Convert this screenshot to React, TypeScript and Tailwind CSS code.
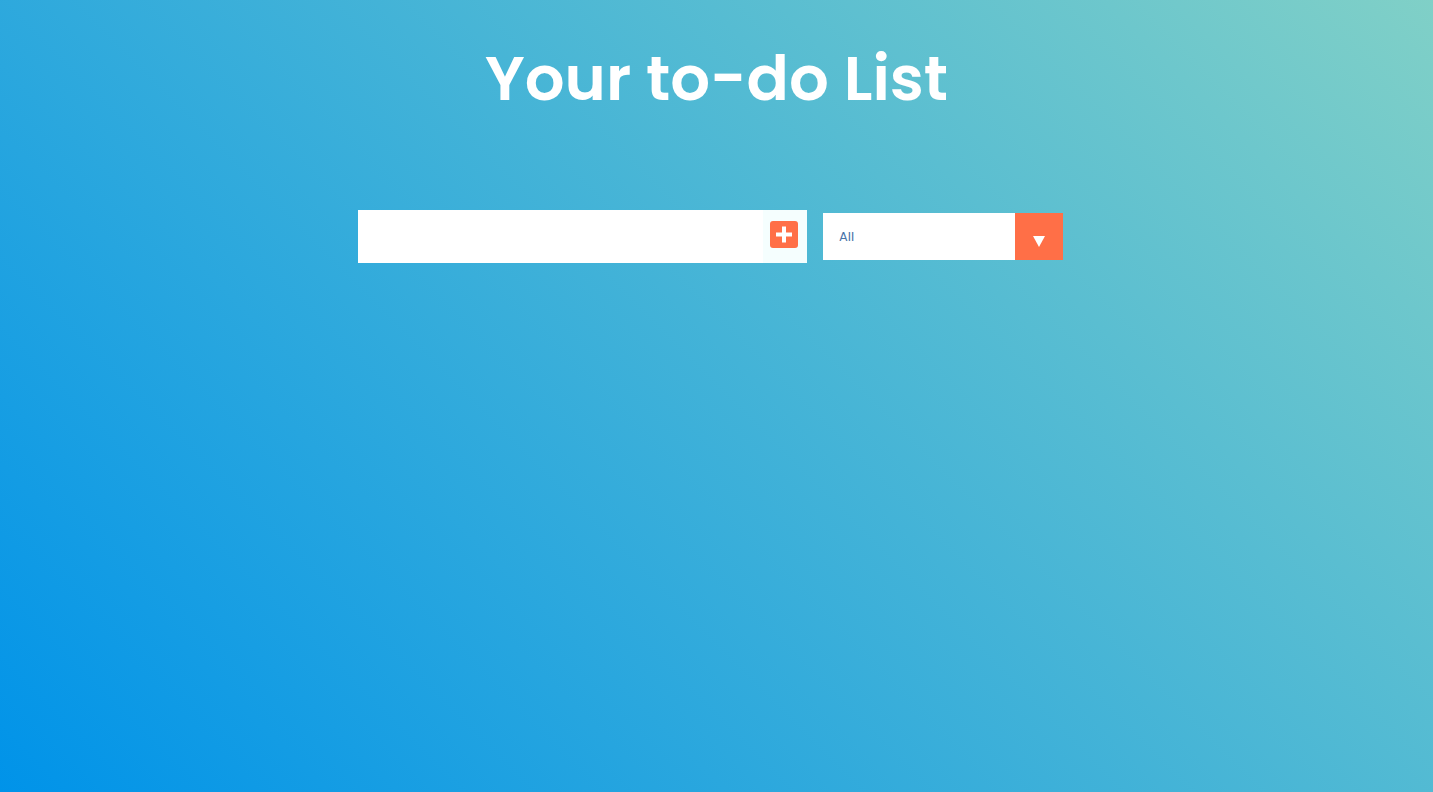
import { useState } from 'react';

const PlusIcon = () => (
  <svg width="28" height="27" viewBox="0 0 28 27">
    <rect x="0" y="0" width="28" height="27" rx="3" fill="#ff6f47" />
    <rect x="6" y="11.5" width="16" height="4" fill="white" />
    <rect x="12" y="5.5" width="4" height="16" fill="white" />
  </svg>
);

const App = () => {
  const [text, setText] = useState('');
  const [filter, setFilter] = useState('all');

  return (
    <div className="min-h-[792px] w-full bg-[linear-gradient(45deg,#0093e9_0%,#80d0c7_100%)] font-['Poppins','Lato','Liberation_Sans',sans-serif] text-white">
      <header className="flex justify-center pt-[38px]">
        <h1 className="text-[62.5px] leading-[80px] font-semibold">Your to-do List</h1>
      </header>

      <form className="mt-[92px] flex items-center justify-center gap-4 pr-3" onSubmit={(e) => e.preventDefault()}>
        <div className="flex h-[53px] w-[449px] bg-white">
          <input
            type="text"
            className="h-full flex-1 px-3 text-[18px] text-[#333] outline-none"
            value={text}
            onChange={(e) => setText(e.target.value)}
          />
          <button type="submit" className="flex h-full w-[44px] items-start bg-[#f5fefe] pl-[7px] pt-[11px]">
            <PlusIcon />
          </button>
        </div>

        <div className="flex h-[47px] w-[240px] bg-white">
          <select
            className="h-full flex-1 appearance-none bg-white pl-4 font-['Poppins','Lato','Liberation_Sans',sans-serif] text-[13px] text-[#4a74a8] outline-none"
            value={filter}
            onChange={(e) => setFilter(e.target.value)}
          >
            <option value="all">All</option>
            <option value="completed">Completed</option>
            <option value="uncompleted">Uncompleted</option>
          </select>
          <div className="flex h-full w-[48px] items-center justify-center bg-[#ff6f47] pt-[10px]">
            <svg width="12" height="11" viewBox="0 0 12 11">
              <path d="M0 0 H12 L6 11 Z" fill="white" />
            </svg>
          </div>
        </div>
      </form>
    </div>
  );
};

export default App;
